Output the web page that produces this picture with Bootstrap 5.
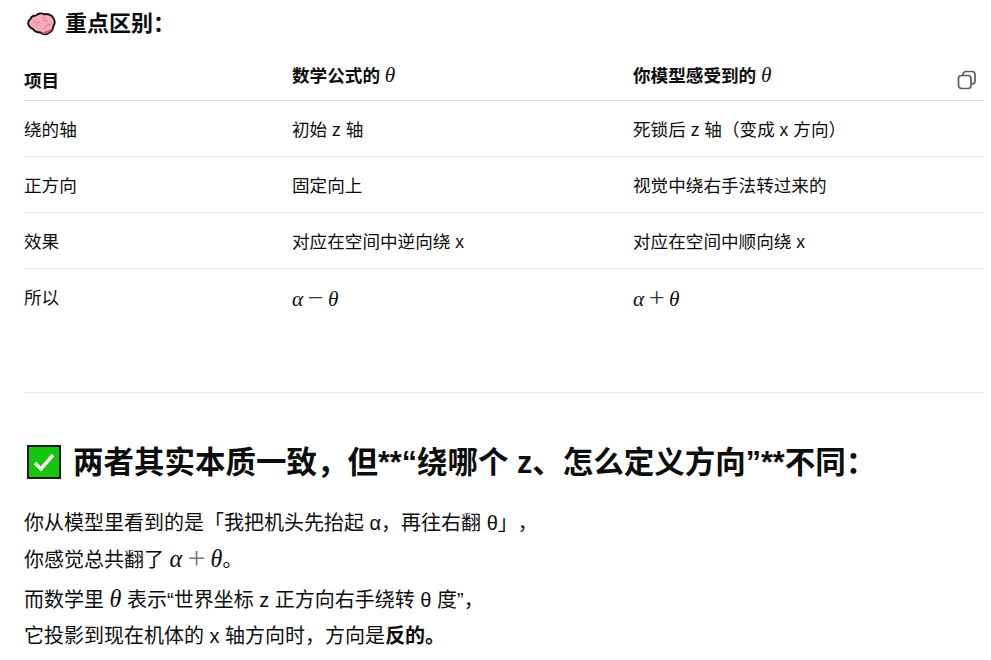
<!DOCTYPE html>
<html lang="zh">
<head>
<meta charset="utf-8">
<title>重点区别</title>
<link href="https://cdn.jsdelivr.net/npm/bootstrap@5.3.0/dist/css/bootstrap.min.css" rel="stylesheet">
<style>
html,body{height:660px;overflow:hidden;background:#fff}
body{font-family:"Liberation Sans","Noto Sans CJK SC",sans-serif;color:#0d0d0d;font-size:17.6px;text-spacing-trim:space-all}
.sheet{padding:0 7px 0 24px}
.title-a{font-size:22px;font-weight:700;line-height:30px;margin:9px 0 0;display:flex;align-items:center;height:30px;color:#0d0d0d}
.title-a svg{margin:0 9px 0 3px}
.cmp{width:100%;table-layout:fixed;margin:13px 0 0;--bs-table-color:#0d0d0d}
.cmp col:nth-child(1){width:268px}
.cmp col:nth-child(2){width:341px}
.cmp th,.cmp td{padding:15px 0 12px;line-height:28px;font-size:17.6px;border-color:#ececec;position:relative}
.cmp th{padding:0 0 5px;height:48px;vertical-align:bottom;font-weight:700;border-color:#dcdcdc}
.cmp th.raise{padding-bottom:10px}
.cmp tr:last-child td{border-bottom:0}
.mth{font-family:"Liberation Serif",serif;font-size:1.21em;font-style:italic;font-weight:400}
.mop{font-family:"Liberation Serif",serif;font-size:1.6em;line-height:1;font-weight:400;padding:0 .16em;color:#333;vertical-align:-.05em}
.para .mop{color:#777}
.copy-ic{position:absolute;right:7px;bottom:10px}
.sep{border:0;border-top:1px solid #ececec;opacity:1;margin:67px 0 0 0;height:0}
.title-b{font-size:30.5px;font-weight:700;line-height:40px;margin:49px 0 0;display:flex;align-items:center;color:#0d0d0d}
.title-b svg{margin:0 12px 0 3px}
.para{margin:23px 0 0;line-height:36px;font-size:20px}
.para+.para{margin-top:3px}
</style>
</head>
<body>
<main class="sheet">
  <h3 class="title-a">
    <svg width="29" height="24" viewBox="0 0 29 24"><path d="M3.500 7C4.500 4 7.500 3.500 9 3.500 11 1.200 15 .8 17 2.300 20 1.500 24.500 2.500 26 5.500 28 8 28 11.500 26.500 14 26 17 24 20 21.500 21 19 23 15.500 22.800 13.500 20.500 10.500 20.500 7.500 19.500 6 17 3 16 .8 13 1.200 10.500 1.400 9 2.300 7.800 3.500 7Z" fill="#f5a9b8" stroke="#111" stroke-width="1.900" stroke-linejoin="round"/><path d="M14.500 20.500c2 1.700 5 1.700 7 .3 2-1 3.500-3 4.200-5.300-3 3.200-7 4-11.200 5Z" fill="#e8505f"/><path d="M6.500 9.500l3.500 1.500-.5 3.500M10 11l3-1.500M16 5l1 3.500 3.500 .5M21 13l-3 1.500.5 3M21 13l3-1" fill="none" stroke="#e57a8c" stroke-width="1"/></svg>
    重点区别：
  </h3>
  <table class="table cmp mb-0">
    <colgroup><col><col><col></colgroup>
    <thead>
      <tr>
        <th>项目</th>
        <th class="raise">数学公式的 <span class="mth">θ</span></th>
        <th class="raise">你模型感受到的 <span class="mth">θ</span>
          <svg class="copy-ic" width="20" height="20" viewBox="0 0 20 20" fill="none" stroke="#5d5d5d" stroke-width="1.700"><rect x="1.500" y="5.500" width="12.500" height="13" rx="3"/><path d="M6 5V4.500a3 3 0 0 1 3-3h6a3 3 0 0 1 3 3V11a3 3 0 0 1-3 3h-1"/></svg>
        </th>
      </tr>
    </thead>
    <tbody>
      <tr><td>绕的轴</td><td>初始 z 轴</td><td>死锁后 z 轴（变成 x 方向）</td></tr>
      <tr><td>正方向</td><td>固定向上</td><td>视觉中绕右手法转过来的</td></tr>
      <tr><td>效果</td><td>对应在空间中逆向绕 x</td><td>对应在空间中顺向绕 x</td></tr>
      <tr><td>所以</td><td><span class="mth">α</span><span class="mop">−</span><span class="mth">θ</span></td><td><span class="mth">α</span><span class="mop">+</span><span class="mth">θ</span></td></tr>
    </tbody>
  </table>
  <hr class="sep">
  <h2 class="title-b">
    <svg width="34" height="34" viewBox="0 0 34 34"><rect x="1" y="1" width="32" height="32" fill="#16c60c" stroke="#1a1a1a" stroke-width="2"/><path d="M8 18l6 6L26 10" fill="none" stroke="#fff" stroke-width="3.500"/></svg>
    两者其实本质一致，但**“绕哪个 z、怎么定义方向”**不同：
  </h2>
  <p class="para">你从模型里看到的是「我把机头先抬起 α，再往右翻 θ」，<br>你感觉总共翻了 <span class="mth">α</span><span class="mop">+</span><span class="mth">θ</span>。</p>
  <p class="para">而数学里 <span class="mth">θ</span> 表示“世界坐标 z 正方向右手绕转 θ 度”，<br>它投影到现在机体的 x 轴方向时，方向是<strong>反的。</strong></p>
</main>
</body>
</html>
